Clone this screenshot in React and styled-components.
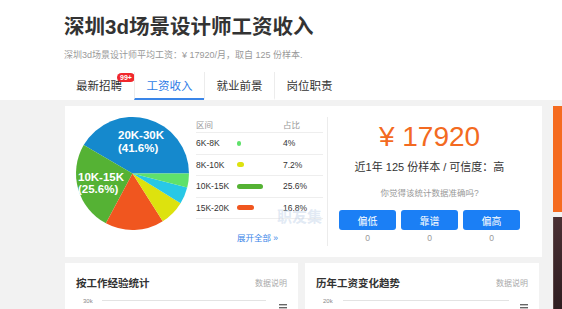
import React from "react";
import styled, { createGlobalStyle } from "styled-components";

const FONT = `"Liberation Sans", "Noto Sans CJK SC", sans-serif`;

const GlobalStyle = createGlobalStyle`
  body {
    margin: 0;
    background: #f2f2f2;
    font-family: ${FONT};
    overflow: hidden;
  }
`;

const Header = styled.header`
  background: #fff;
  height: 100px;
  box-sizing: border-box;
  padding: 10px 0 0 64px;
`;

const Title = styled.h1`
  margin: 0;
  font-size: 20.5px;
  line-height: 34px;
  font-weight: 700;
  color: #333;
`;

const Subtitle = styled.p`
  margin: 5px 0 0;
  font-size: 9px;
  line-height: 12px;
  color: #999;
`;

const Tabs = styled.nav`
  display: flex;
  margin-top: 11px;
`;

const Tab = styled.div`
  position: relative;
  width: 70px;
  height: 28px;
  box-sizing: border-box;
  display: flex;
  align-items: center;
  justify-content: center;
  font-size: 11.5px;
  color: ${p => (p.active ? "#2f7ce6" : "#333")};
  border-left: ${p => (p.first ? "none" : "1px solid #ececec")};
  border-bottom: 2px solid ${p => (p.active ? "#3a85e8" : "transparent")};
`;

const Badge = styled.span`
  position: absolute;
  left: 53px;
  top: 1px;
  height: 9px;
  padding: 0 3px;
  border-radius: 5px;
  background: #f0282d;
  color: #fff;
  font-size: 7px;
  line-height: 9px;
  font-weight: 700;
`;

const Page = styled.div`
  display: flex;
  gap: 11px;
  padding: 6px 0 0 65px;
`;

const Column = styled.div`
  width: 477px;
  flex-shrink: 0;
`;

const SalaryCard = styled.section`
  background: #fff;
  height: 151px;
  box-sizing: border-box;
  padding: 11px;
  display: flex;
`;

const PieSvg = styled.svg`
  flex-shrink: 0;
  overflow: visible;
`;

const Table = styled.div`
  position: relative;
  width: 127px;
  margin: -1px 0 0 7px;
  font-size: 8.5px;
  color: #333;
`;

const Row = styled.div`
  display: grid;
  grid-template-columns: 41px 46px 1fr;
  align-items: center;
  height: ${p => (p.head ? 16 : 20.5)}px;
  border-bottom: 1px solid #eee;
  color: ${p => (p.head ? "#999" : "#333")};
`;

const Bar = styled.span`
  display: block;
  height: 5px;
  border-radius: 3px;
  background: ${p => p.color};
`;

const More = styled.div`
  margin-top: 13px;
  padding-left: 41px;
  font-size: 8.5px;
  line-height: 12px;
  color: #3a85e8;
`;

const Watermark = styled.span`
  position: absolute;
  left: 81px;
  top: 89px;
  font-size: 15px;
  font-weight: 700;
  color: rgba(190, 208, 232, 0.45);
`;

const Divider = styled.div`
  width: 1px;
  margin-left: 4px;
  background: #ececec;
`;

const Summary = styled.div`
  flex: 1;
  display: flex;
  flex-direction: column;
  align-items: center;
`;

const Price = styled.div`
  margin-top: 4px;
  font-size: 28px;
  line-height: 32px;
  color: #f36a21;
`;

const Sample = styled.div`
  margin-top: 7px;
  font-size: 11px;
  line-height: 14px;
  color: #333;
`;

const Question = styled.div`
  margin-top: 13px;
  font-size: 8.5px;
  line-height: 12px;
  color: #999;
`;

const VoteGrid = styled.div`
  margin-top: 11px;
  display: grid;
  grid-template-columns: repeat(3, 57px);
  column-gap: 5px;
  row-gap: 3px;
  justify-items: center;
`;

const VoteButton = styled.button`
  width: 57px;
  height: 20px;
  border: none;
  border-radius: 3px;
  background: #1b7ff5;
  color: #fff;
  font-family: ${FONT};
  font-size: 10px;
  padding: 0;
`;

const Count = styled.span`
  font-size: 8.5px;
  line-height: 10px;
  color: #999;
`;

const BottomRow = styled.div`
  display: flex;
  gap: 7px;
  margin-top: 6px;
`;

const ChartCard = styled.section`
  width: ${p => p.w}px;
  height: 60px;
  box-sizing: border-box;
  background: #fff;
  padding: 12px 11px 0;
`;

const CardHead = styled.div`
  display: flex;
  justify-content: space-between;
  align-items: center;
  height: 14px;
`;

const CardTitle = styled.h3`
  margin: 0;
  font-size: 10.5px;
  font-weight: 700;
  color: #333;
`;

const Note = styled.span`
  font-size: 8px;
  color: #aaa;
`;

const Plot = styled.div`
  display: flex;
  align-items: flex-start;
  margin-top: 7px;
`;

const AxisLabel = styled.span`
  margin-left: 7px;
  font-size: 6px;
  line-height: 10px;
  color: #888;
`;

const GridLine = styled.div`
  flex: 1;
  height: 1px;
  margin: 4px ${p => p.mr}px 0 ${p => p.ml}px;
  background: #e3e3e3;
`;

const Menu = styled.svg`
  margin-top: 8px;
  flex-shrink: 0;
`;

const Sidebar = styled.aside`
  width: 12px;
  height: 203px;
  flex-shrink: 0;
  display: flex;
  flex-direction: column;
  gap: 5px;
`;

const Promo = styled.div`
  height: 106px;
  background: #f56b1f;
`;

const Photo = styled.div`
  flex: 1;
  border-left: 1px solid #5a4545;
  background: linear-gradient(180deg, #4a3034, #2e1d20);
`;

const slices = [
  { pct: 41.6, color: "#1589cd" },
  { pct: 25.6, color: "#55b234" },
  { pct: 16.8, color: "#f0561f" },
  { pct: 7.2, color: "#dde20e" },
  { pct: 4.8, color: "#28c8e6" },
  { pct: 4, color: "#5fe16b" },
];

const rows = [
  { range: "6K-8K", pct: 4, color: "#5fe16b" },
  { range: "8K-10K", pct: 7.2, color: "#dde20e" },
  { range: "10K-15K", pct: 25.6, color: "#55b234" },
  { range: "15K-20K", pct: 16.8, color: "#f0561f" },
];

const Pie = () => {
  const c = 56.5;
  const r = 56.5;
  const pt = a => {
    const rad = (a * Math.PI) / 180;
    return `${c + r * Math.cos(rad)} ${c - r * Math.sin(rad)}`;
  };
  let start = 0;
  const paths = slices.map(s => {
    const end = start + (s.pct / 100) * 360;
    const large = end - start > 180 ? 1 : 0;
    const d = `M ${c} ${c} L ${pt(start)} A ${r} ${r} 0 ${large} 0 ${pt(end)} Z`;
    start = end;
    return <path key={s.color} d={d} fill={s.color} />;
  });
  return (
    <PieSvg width="113" height="113" viewBox="0 0 113 113">
      {paths}
      <g fill="#fff" fontFamily={FONT} fontWeight="700" fontSize="11.5">
        <text x="42" y="22">20K-30K</text>
        <text x="42" y="34.5">(41.6%)</text>
        <text x="2" y="63.5">10K-15K</text>
        <text x="2" y="76">(25.6%)</text>
      </g>
    </PieSvg>
  );
};

const MenuIcon = () => (
  <Menu width="8" height="8" viewBox="0 0 8 8">
    <g fill="#666">
      <rect y="0" width="8" height="1.4" />
      <rect y="3" width="8" height="1.4" />
      <rect y="6" width="8" height="1.4" />
    </g>
  </Menu>
);

const ChartStub = ({ title, label, w, ml, mr }) => (
  <ChartCard w={w}>
    <CardHead>
      <CardTitle>{title}</CardTitle>
      <Note>数据说明</Note>
    </CardHead>
    <Plot>
      <AxisLabel>{label}</AxisLabel>
      <GridLine ml={ml} mr={mr} />
      <MenuIcon />
    </Plot>
  </ChartCard>
);

export default function App() {
  return (
    <>
      <GlobalStyle />
      <Header>
        <Title>深圳3d场景设计师工资收入</Title>
        <Subtitle>深圳3d场景设计师平均工资：¥ 17920/月，取自 125 份样本.</Subtitle>
        <Tabs>
          <Tab first>
            最新招聘<Badge>99+</Badge>
          </Tab>
          <Tab active>工资收入</Tab>
          <Tab>就业前景</Tab>
          <Tab>岗位职责</Tab>
        </Tabs>
      </Header>
      <Page>
        <Column>
          <SalaryCard>
            <Pie />
            <Table>
              <Row head>
                <span>区间</span>
                <span />
                <span>占比</span>
              </Row>
              {rows.map(r => (
                <Row key={r.range}>
                  <span>{r.range}</span>
                  <span>
                    <Bar color={r.color} style={{ width: `${Math.max(r.pct, 4)}px` }} />
                  </span>
                  <span>{r.pct}%</span>
                </Row>
              ))}
              <More>展开全部 »</More>
              <Watermark>职友集</Watermark>
            </Table>
            <Divider />
            <Summary>
              <Price>¥ 17920</Price>
              <Sample>近1年 125 份样本 / 可信度：高</Sample>
              <Question>你觉得该统计数据准确吗?</Question>
              <VoteGrid>
                <VoteButton>偏低</VoteButton>
                <VoteButton>靠谱</VoteButton>
                <VoteButton>偏高</VoteButton>
                <Count>0</Count>
                <Count>0</Count>
                <Count>0</Count>
              </VoteGrid>
            </Summary>
          </SalaryCard>
          <BottomRow>
            <ChartStub title="按工作经验统计" label="30k" w={233} ml={9} mr={13} />
            <ChartStub title="历年工资变化趋势" label="20k" w={234} ml={10} mr={11} />
          </BottomRow>
        </Column>
        <Sidebar>
          <Promo />
          <Photo />
        </Sidebar>
      </Page>
    </>
  );
}
